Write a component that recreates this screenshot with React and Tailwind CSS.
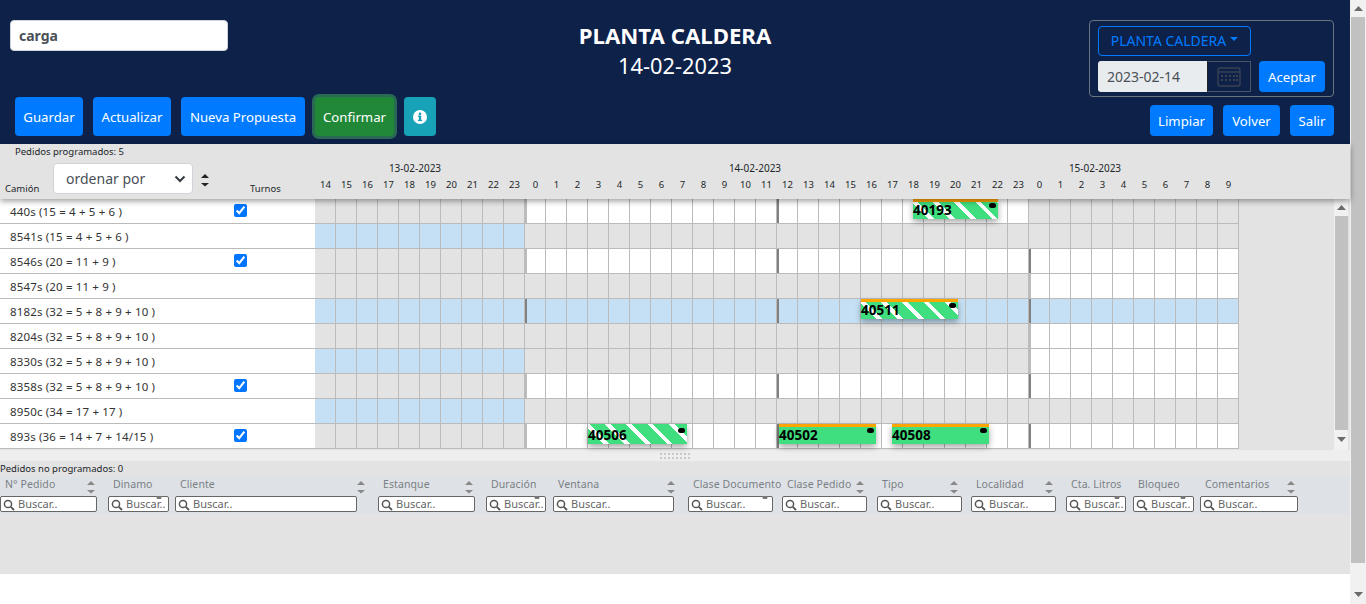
const hours = [];
for (let h = 14; h < 24; h++) hours.push(h);
for (let h = 0; h < 24; h++) hours.push(h);
for (let h = 0; h < 10; h++) hours.push(h);

const G = "g", W = "w", B = "b";
const rows = [
  { label: "440s (15 = 4 + 5 + 6 )", check: true, s: [G, W, G] },
  { label: "8541s (15 = 4 + 5 + 6 )", s: [B, G, G] },
  { label: "8546s (20 = 11 + 9 )", check: true, s: [G, W, W] },
  { label: "8547s (20 = 11 + 9 )", s: [G, G, W] },
  { label: "8182s (32 = 5 + 8 + 9 + 10 )", s: [B, B, B] },
  { label: "8204s (32 = 5 + 8 + 9 + 10 )", s: [G, G, W] },
  { label: "8330s (32 = 5 + 8 + 9 + 10 )", s: [B, G, W] },
  { label: "8358s (32 = 5 + 8 + 9 + 10 )", check: true, s: [G, W, W] },
  { label: "8950c (34 = 17 + 17 )", s: [B, G, G] },
  { label: "893s (36 = 14 + 7 + 14/15 )", check: true, s: [G, W, W] },
];

const bg = { g: "bg-[#e3e3e3]", w: "bg-white", b: "bg-[#c5e0f5]" };
const DARK = "border-l-2 border-l-[#808080]";
const LIGHT = "border-l-2 border-l-[#bbbbbb]";

function marker(i, s) {
  if (i === 10) {
    if (s[1] === W) return LIGHT;
    if (s[1] === B) return DARK;
  }
  if (i === 22 && s[1] !== G) return DARK;
  if (i === 34) {
    if (s[2] === B) return DARK;
    if (s[2] === W) return s[1] === W ? DARK : LIGHT;
  }
  return "";
}

function Btn({ children, className = "" }) {
  return (
    <button className={"h-[39px] rounded-[4px] bg-[#007bff] text-white text-[13.2px] pt-[2px] flex items-center justify-center " + className}>
      {children}
    </button>
  );
}

function Bar({ id, left, top, width, stripes, orange }) {
  return (
    <div
      className={
        "absolute h-[20px] shadow-[0_3px_6px_rgba(0,0,0,0.35)] " +
        (stripes
          ? "bg-[repeating-linear-gradient(45deg,#3fdf80_0,#3fdf80_11px,#ffffff_11px,#ffffff_15px)]"
          : "bg-[#3fdf80]")
      }
      style={{ left, top, width }}
    >
      {orange && <div className="absolute left-0 right-0 top-0 h-[3px] bg-[#ffa500]" />}
      <span className="absolute left-0 top-[1px] text-[13.5px] leading-[20px] font-bold text-black">{id}</span>
      <span className="absolute right-[2px] top-[4px] w-[7px] h-[5px] rounded-full bg-black" />
    </div>
  );
}

function Sort({ color = "#888", className = "", style }) {
  return (
    <svg width="10" height="14" viewBox="0 0 10 14" className={className} style={style}>
      <path d="M5 1 L9 5 L1 5 Z" fill={color} />
      <path d="M1 10 L9 10 L5 13.5 Z" fill={color} />
    </svg>
  );
}

const cols = [
  { t: "N° Pedido", x: 0, w: 97, sort: 86 },
  { t: "Dinamo", x: 108, w: 61, mark: 48 },
  { t: "Cliente", x: 175, w: 182, sort: 181 },
  { t: "Estanque", x: 378, w: 97, sort: 86 },
  { t: "Duración", x: 486, w: 60, mark: 48 },
  { t: "Ventana", x: 553, w: 121, sort: 113 },
  { t: "Clase Documento", x: 688, w: 85, mark: 74 },
  { t: "Clase Pedido", x: 782, w: 85, sort: 73 },
  { t: "Tipo", x: 877, w: 85, sort: 72 },
  { t: "Localidad", x: 971, w: 85, sort: 73 },
  { t: "Cta. Litros", x: 1066, w: 60, mark: 48 },
  { t: "Bloqueo", x: 1133, w: 61, mark: 47 },
  { t: "Comentarios", x: 1200, w: 98, sort: 86 },
];

function Arrow({ up, className = "" }) {
  return (
    <svg width="9" height="5" viewBox="0 0 9 5" className={className}>
      <path d={up ? "M4.5 0 L9 5 L0 5 Z" : "M0 0 L9 0 L4.5 5 Z"} fill="#6b6b6b" />
    </svg>
  );
}

export default function App() {
  return (
    <div
      className="flex w-[1366px] h-[604px] overflow-hidden bg-white text-[#212529]"
      style={{ fontFamily: '"Noto Sans", "Open Sans", sans-serif' }}
    >
      <div className="w-[1350px] flex flex-col">
        {/* Header */}
        <header className="h-[144px] bg-[#0d2149] grid grid-cols-[1fr_auto_1fr] shrink-0">
          <div className="flex flex-col">
            <div className="ml-[10px] mt-[20px] w-[218px] h-[31px] rounded-[4px] bg-white flex items-center pl-[8px] text-[14px] font-bold text-[#495057] border border-[#ced4da]">
              carga
            </div>
            <div className="ml-[15px] mt-[46px] flex items-center">
              <Btn className="w-[68px]">Guardar</Btn>
              <Btn className="w-[78px] ml-[10px]">Actualizar</Btn>
              <Btn className="w-[124px] ml-[10px]">Nueva Propuesta</Btn>
              <Btn className="w-[79px] ml-[10px] !bg-[#218838] shadow-[0_0_0_3px_rgba(72,180,97,0.5)]">Confirmar</Btn>
              <button className="h-[39px] w-[32px] ml-[10px] rounded-[4px] bg-[#17a2b8] flex items-center justify-center">
                <svg width="14" height="14" viewBox="0 0 14 14">
                  <circle cx="7" cy="7" r="7" fill="#fff" />
                  <rect x="5.8" y="5.8" width="2.4" height="5" fill="#17a2b8" />
                  <rect x="4.9" y="5.6" width="2.5" height="1.2" fill="#17a2b8" />
                  <rect x="4.9" y="9.9" width="4.2" height="1.2" fill="#17a2b8" />
                  <circle cx="7" cy="3.9" r="1.3" fill="#17a2b8" />
                </svg>
              </button>
            </div>
          </div>
          <div className="text-center text-white pt-[21px]">
            <div className="text-[22.2px] font-bold leading-[30px]">PLANTA CALDERA</div>
            <div className="text-[21.8px] leading-[30px]">14-02-2023</div>
          </div>
          <div className="flex flex-col items-end pr-[16px] pt-[20px]">
            <div className="w-[245px] h-[77px] border border-[#6c757d] rounded-[4px] pl-[8px] pt-[5px]">
              <div className="w-[153px] h-[30px] pb-[2px] border border-[#007bff] rounded-[4px] flex items-center justify-center text-[14px] text-[#007bff]">
                PLANTA CALDERA
                <span className="ml-[4px] w-0 h-0 border-x-[4px] border-x-transparent border-t-[4px] border-t-[#007bff] mb-[2px]" />
              </div>
              <div className="flex items-center mt-[5px]">
                <div className="w-[109px] h-[31px] bg-[#e9ecef] rounded-l-[3px] flex items-center pl-[9px] text-[14px] text-[#495057]">
                  2023-02-14
                </div>
                <div className="w-[44px] h-[31px] border border-[#4a5568] border-l-[#222] flex items-center justify-center">
                  <svg width="24" height="20" viewBox="0 0 24 20" fill="none">
                    <rect x="1" y="1" width="22" height="18" rx="2" stroke="#3a4252" strokeWidth="1.4" />
                    <path d="M1 5 H23" stroke="#3a4252" strokeWidth="1.4" />
                    <g fill="#3a4252">
                      <rect x="4" y="8" width="2" height="2" /><rect x="8" y="8" width="2" height="2" /><rect x="12" y="8" width="2" height="2" /><rect x="16" y="8" width="2" height="2" /><rect x="19" y="8" width="2" height="2" />
                      <rect x="4" y="12" width="2" height="2" /><rect x="8" y="12" width="2" height="2" /><rect x="12" y="12" width="2" height="2" /><rect x="16" y="12" width="2" height="2" /><rect x="19" y="12" width="2" height="2" />
                    </g>
                  </svg>
                </div>
                <Btn className="w-[66px] !h-[31px] ml-[8px]">Aceptar</Btn>
              </div>
            </div>
            <div className="flex mt-[8px]">
              <Btn className="w-[63px] !h-[31px]">Limpiar</Btn>
              <Btn className="w-[57px] !h-[31px] ml-[10px]">Volver</Btn>
              <Btn className="w-[44px] !h-[31px] ml-[10px]">Salir</Btn>
            </div>
          </div>
        </header>

        {/* Gantt header */}
        <div className="relative z-10 h-[55px] shrink-0 bg-[#e3e3e3] shadow-[0_2px_6px_rgba(0,0,0,0.4)] flex">
          <div className="w-[315px] shrink-0 relative">
            <div className="absolute left-[15px] top-[1px] text-[9.5px] leading-[14px]">Pedidos programados: 5</div>
            <div className="absolute left-[5px] top-[38px] text-[9.5px] leading-[14px]">Camión</div>
            <div className="absolute left-[53px] top-[19px] w-[140px] h-[31px] rounded-[4px] bg-white border border-[#ced4da] flex items-center justify-between pl-[12px] pr-[6px] text-[14px] text-[#495057]">
              ordenar por
              <svg width="12" height="8" viewBox="0 0 12 8" fill="none">
                <path d="M1.5 1.5 L6 6 L10.5 1.5" stroke="#343a40" strokeWidth="2" />
              </svg>
            </div>
            <div className="absolute left-[200px] top-[29px]"><Sort color="#222" /></div>
            <div className="absolute left-[250px] top-[38px] text-[9.5px] leading-[14px]">Turnos</div>
          </div>
          <div className="flex-1">
            <div className="flex h-[33px] items-end">
              <div className="w-[200px] text-center text-[10px] leading-[14px] pb-[2px]">13-02-2023</div>
              <div className="w-[480px] text-center text-[10px] leading-[14px] pb-[2px]">14-02-2023</div>
              <div className="w-[200px] text-center text-[10px] leading-[14px] pb-[2px]">15-02-2023</div>
            </div>
            <div className="flex">
              {hours.map((h, i) => (
                <div key={i} className="w-[21px] text-center text-[9.5px] leading-[14px] mt-[1px]">{h}</div>
              ))}
            </div>
          </div>
        </div>

        {/* Gantt body */}
        <div className="flex h-[251px] shrink-0 bg-[#e3e3e3]">
          <div className="w-[1239px] shrink-0 relative">
            {rows.map((r, ri) => (
              <div key={ri} className="flex h-[25px] border-b border-[#bbbbbb]">
                <div className="w-[315px] shrink-0 bg-white relative flex items-center pl-[10px] pt-[1px] text-[11.5px] text-[#333]">
                  <span className="tracking-[0.15px]">{r.label}</span>
                  {r.check && (
                    <input
                      type="checkbox"
                      defaultChecked
                      readOnly
                      className="absolute left-[234px] top-[5px] w-[13px] h-[13px] m-0 accent-[#0075ff]"
                    />
                  )}
                </div>
                {hours.map((h, i) => {
                  const sec = i < 10 ? 0 : i < 34 ? 1 : 2;
                  return (
                    <div
                      key={i}
                      className={"w-[21px] shrink-0 border-r border-[#bbbbbb] " + bg[r.s[sec]] + " " + marker(i, r.s)}
                    />
                  );
                })}
              </div>
            ))}
            <Bar id="40193" left={913} top={0} width={85} stripes orange />
            <Bar id="40511" left={861} top={100} width={97} stripes orange />
            <Bar id="40506" left={588} top={225} width={99} stripes />
            <Bar id="40502" left={779} top={225} width={97} orange />
            <Bar id="40508" left={892} top={225} width={97} orange />
          </div>
          <div className="flex-1" />
          <div className="w-[14px] mr-[2px] bg-[#f1f1f1] flex flex-col items-center">
            <Arrow up className="mt-[6px]" />
            <div className="w-[13px] mt-[6px] h-[214px] bg-[#c1c1c1]" />
            <Arrow className="mt-[7px]" />
          </div>
        </div>

        {/* Splitter */}
        <div className="h-[11px] shrink-0 bg-[#eeeeee] flex items-center justify-center">
          <div className="grid grid-cols-[repeat(8,2px)] gap-[2px]">
            {Array.from({ length: 16 }).map((_, i) => (
              <div key={i} className="w-[2px] h-[2px] bg-[#c8c8c8]" />
            ))}
          </div>
        </div>

        {/* Lower table */}
        <div className="h-[113px] shrink-0 bg-[#e3e3e3]">
          <div className="h-[15px] text-[9.5px] leading-[15px]">Pedidos no programados: 0</div>
          <div className="h-[38px] bg-[#dee2e6] relative flex">
            {cols.map((c, i) => {
              const next = i + 1 < cols.length ? cols[i + 1].x : c.x + c.w + 6;
              return (
                <div key={i} className="relative shrink-0 h-full" style={{ width: next - c.x }}>
                  <div className="pl-[5px] text-[10.5px] leading-[16px] text-[#7a7f85] whitespace-nowrap tracking-[0.1px]">{c.t}</div>
                  <div
                    className="absolute left-0 top-[20px] h-[16px] bg-white border border-[#666] rounded-[2px] flex items-center overflow-hidden text-[11px] text-[#666] pt-[1px]"
                    style={{ width: c.w }}
                  >
                    <svg width="12" height="12" viewBox="0 0 12 12" fill="none" className="ml-[2px] mr-[3px] shrink-0">
                      <circle cx="5" cy="5" r="3.6" stroke="#555" strokeWidth="1.5" />
                      <path d="M7.8 7.8 L11 11" stroke="#555" strokeWidth="1.8" />
                    </svg>
                    Buscar..
                  </div>
                  {c.sort && <Sort className="absolute top-[4px]" style={{ left: c.sort }} />}
                  {c.mark && (
                    <svg width="6" height="3" viewBox="0 0 6 3" className="absolute top-[20px]" style={{ left: c.mark }}>
                      <path d="M0 0 H6 L5 3 H1 Z" fill="#777" />
                    </svg>
                  )}
                </div>
              );
            })}
          </div>
        </div>
      </div>

      {/* Page scrollbar */}
      <div className="w-[16px] h-full bg-[#f1f1f1] flex flex-col items-center">
        <Arrow up className="mt-[6px]" />
        <div className="w-[14px] mt-[6px] h-[546px] bg-[#c1c1c1]" />
        <Arrow className="mt-[29px]" />
      </div>
    </div>
  );
}
